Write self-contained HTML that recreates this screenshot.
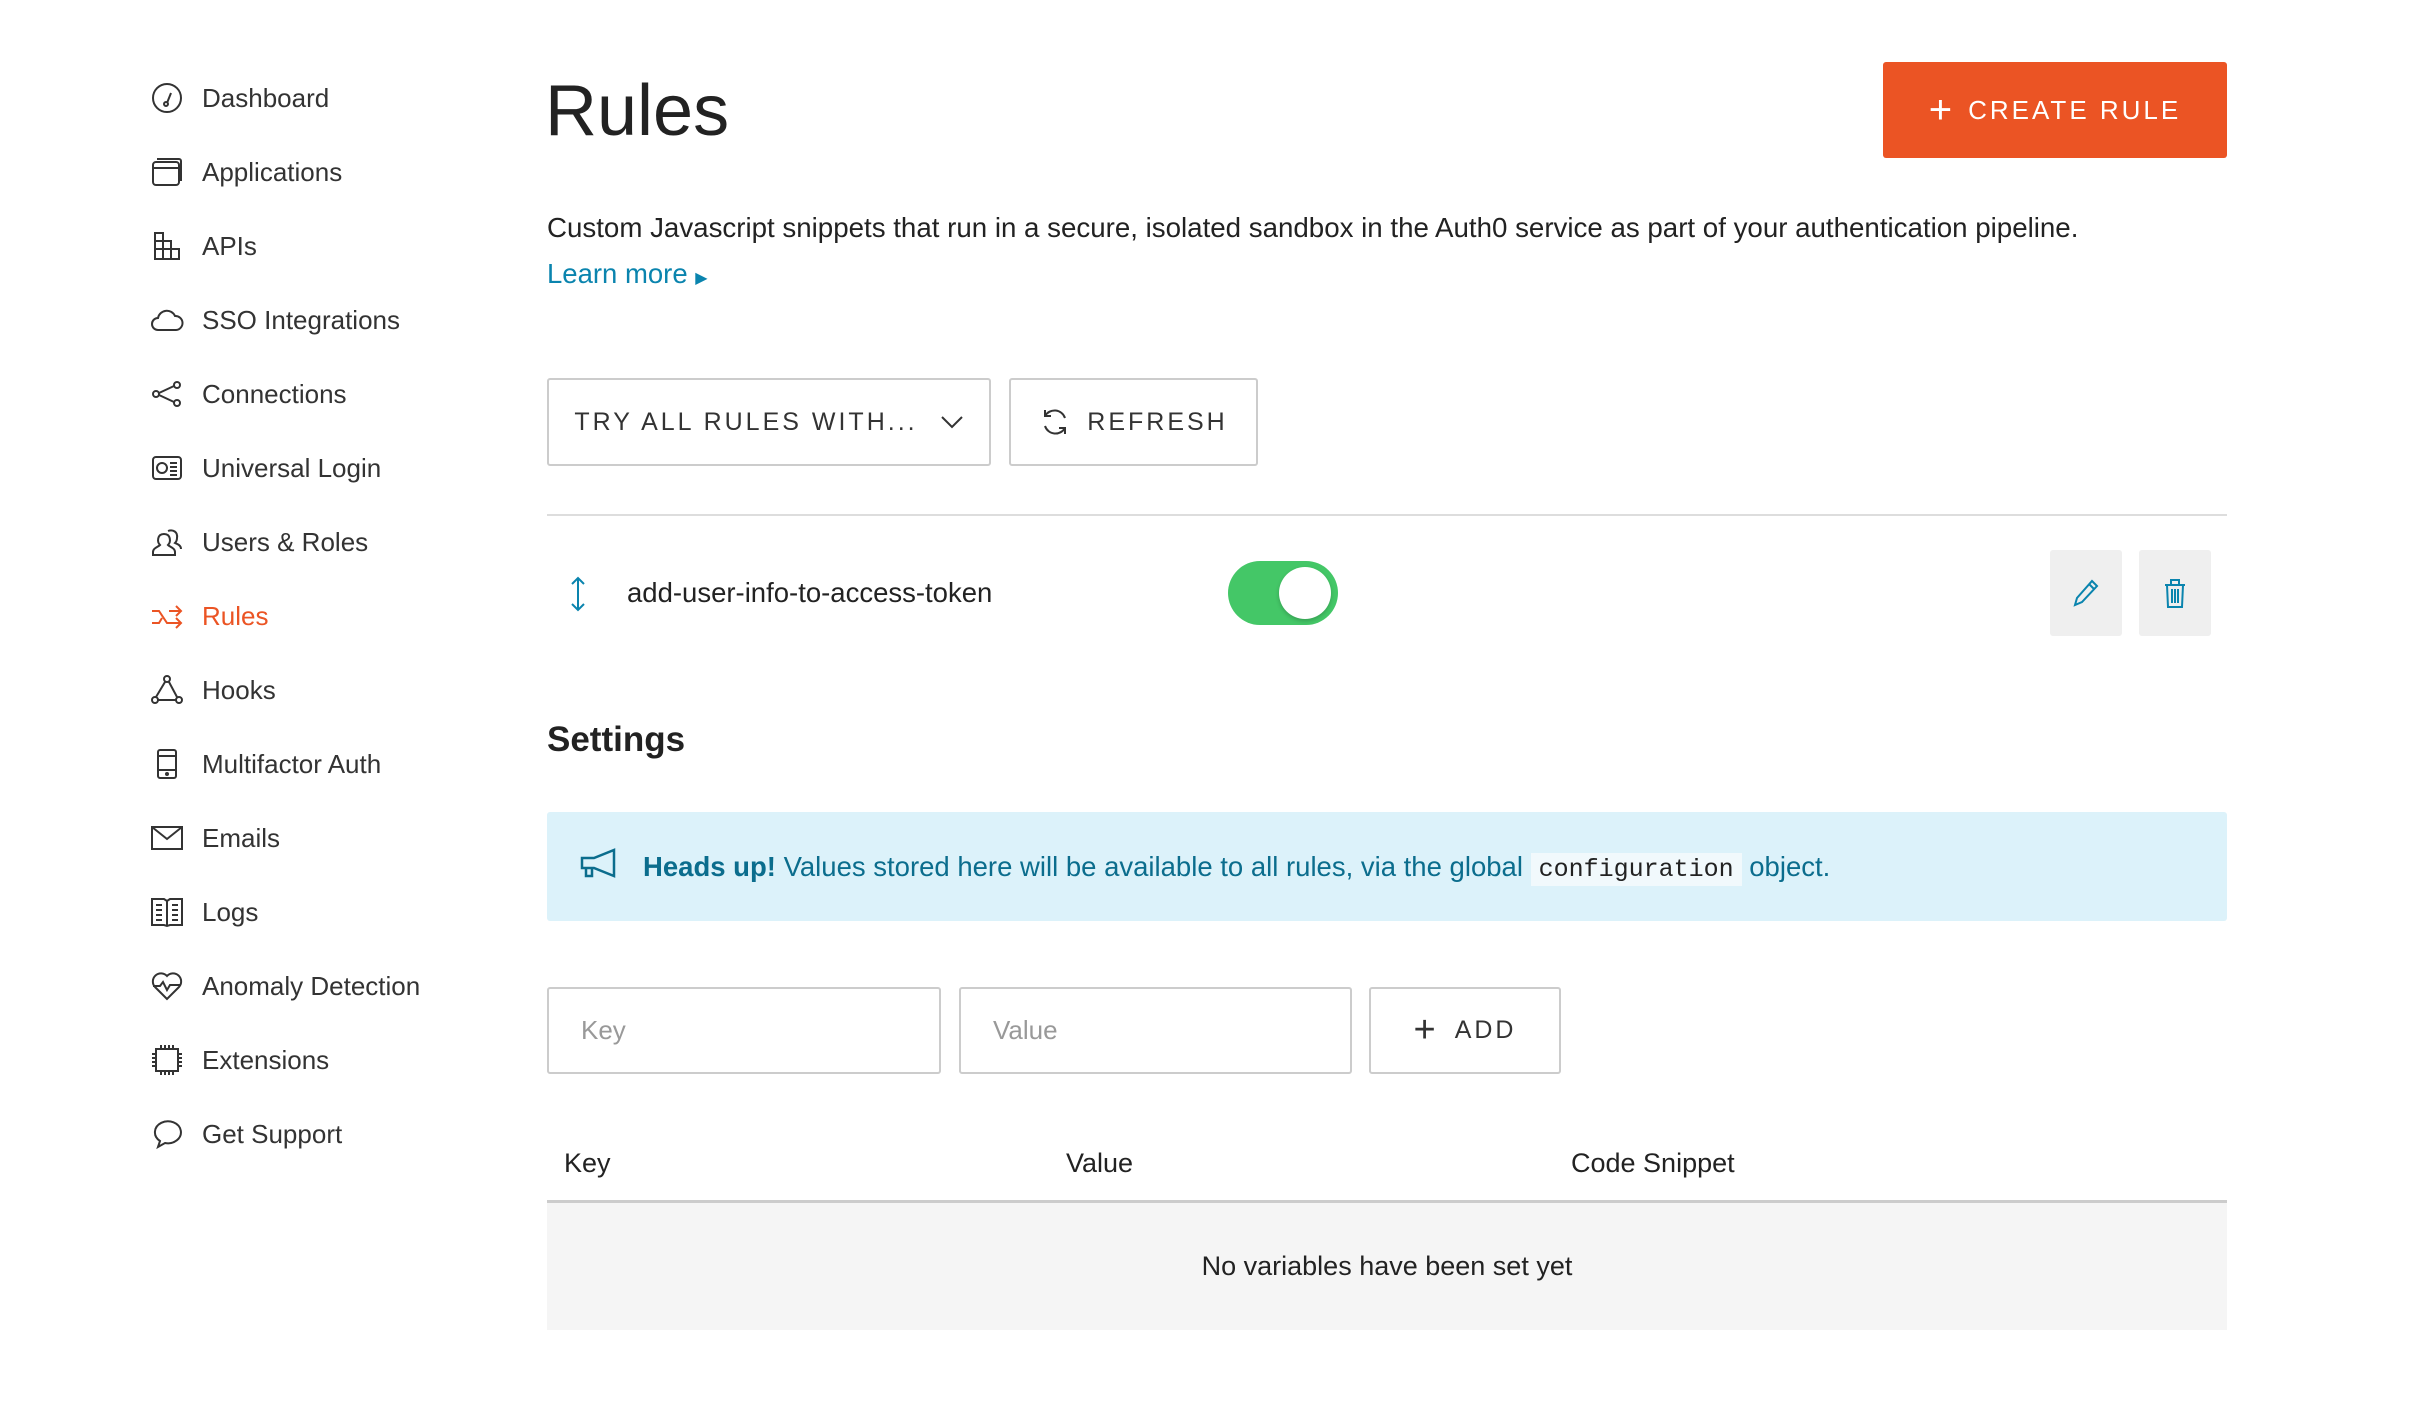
<!DOCTYPE html>
<html><head><meta charset="utf-8"><style>
*{margin:0;padding:0;box-sizing:border-box}
body{width:2436px;height:1410px;background:#fff;font-family:"Liberation Sans",sans-serif;color:#333;position:relative;overflow:hidden}
.a{position:absolute}
.nav{position:absolute;left:150px;height:40px;display:flex;align-items:center;font-size:26px;color:#333}
.nav svg{width:34px;height:34px;margin-right:18px;fill:none;stroke:#333;stroke-width:2}
.nav.on{color:#eb5424}.nav.on svg{stroke:#eb5424}
.btn{position:absolute;border:2px solid #ccc;border-radius:3px;display:flex;align-items:center;justify-content:center;font-size:25px;letter-spacing:3px;color:#333;background:#fff}
.inp{position:absolute;border:2px solid #ccc;border-radius:3px;font-size:26px;color:#999;padding-left:32px;display:flex;align-items:center}
</style></head><body>
<div class="nav" style="top:78px"><svg viewBox="0 0 34 34"><circle cx="17" cy="17" r="14"/><path d="M17 22l4-10"/><circle cx="16" cy="23" r="2"/></svg>Dashboard</div>
<div class="nav" style="top:152px"><svg viewBox="0 0 34 34"><rect x="3" y="7" width="26" height="23" rx="3"/><path d="M3 13h26M7 4h22a2 2 0 0 1 2 2v20"/></svg>Applications</div>
<div class="nav" style="top:226px"><svg viewBox="0 0 34 34"><path d="M5 4h8v26H5zM5 12h16v18M5 20h24v10H5M13 12v18M21 20v10"/></svg>APIs</div>
<div class="nav" style="top:300px"><svg viewBox="0 0 34 34"><path d="M8 27a6 6 0 0 1 0-12 9 9 0 0 1 17-2 7 7 0 0 1 1 14z"/></svg>SSO Integrations</div>
<div class="nav" style="top:374px"><svg viewBox="0 0 34 34"><circle cx="6" cy="17" r="3"/><circle cx="27" cy="8" r="3"/><circle cx="27" cy="26" r="3"/><path d="M9 16l15-7M9 18l15 7"/></svg>Connections</div>
<div class="nav" style="top:448px"><svg viewBox="0 0 34 34"><rect x="3" y="6" width="28" height="22" rx="3"/><circle cx="12" cy="17" r="5"/><path d="M20 12h7M20 16h7M20 20h7M20 24h7"/></svg>Universal Login</div>
<div class="nav" style="top:522px"><svg viewBox="0 0 34 34"><path d="M3 30v-3c0-4 5-5 7-7-3-3-3-11 4-11s7 8 4 11c2 2 7 3 7 7v3zM18 6c5-2 10 1 9 7 0 2-1 4-2 5 2 1 6 2 6 6"/></svg>Users &amp; Roles</div>
<div class="nav on" style="top:596px"><svg viewBox="0 0 34 34"><path d="M2 12h7l8 12h13M2 24h7l3-5M19 12h11M26 7l5 5-5 5M26 19l5 5-5 5"/></svg>Rules</div>
<div class="nav" style="top:670px"><svg viewBox="0 0 34 34"><circle cx="17" cy="6" r="3"/><circle cx="5" cy="27" r="3"/><circle cx="29" cy="27" r="3"/><path d="M15 9l-9 15M19 9l8 15M8 27h18"/></svg>Hooks</div>
<div class="nav" style="top:744px"><svg viewBox="0 0 34 34"><rect x="8" y="3" width="18" height="28" rx="2"/><path d="M8 9h18M8 23h18"/><circle cx="17" cy="27" r="1"/></svg>Multifactor Auth</div>
<div class="nav" style="top:818px"><svg viewBox="0 0 34 34"><rect x="2" y="6" width="30" height="22"/><path d="M2 6l15 12 15-12"/></svg>Emails</div>
<div class="nav" style="top:892px"><svg viewBox="0 0 34 34"><path d="M2 4h12l3 2 3-2h12v26H20l-3 1-3-1H2zM17 6v25M6 10h6M6 15h6M6 20h6M6 25h6M22 10h6M22 15h6M22 20h6M22 25h6"/></svg>Logs</div>
<div class="nav" style="top:966px"><svg viewBox="0 0 34 34"><path d="M17 30L5 18a7 7 0 0 1 12-11 7 7 0 0 1 12 11zM3 17h7l3-4 4 8 3-5h11"/></svg>Anomaly Detection</div>
<div class="nav" style="top:1040px"><svg viewBox="0 0 34 34"><rect x="6" y="6" width="22" height="22"/><path d="M11 2v4M15 2v4M19 2v4M23 2v4M11 28v4M15 28v4M19 28v4M23 28v4M2 11h4M2 15h4M2 19h4M2 23h4M28 11h4M28 15h4M28 19h4M28 23h4"/></svg>Extensions</div>
<div class="nav" style="top:1114px"><svg viewBox="0 0 34 34"><path d="M8 30l2-6a13 11 0 1 1 5 2z"/></svg>Get Support</div>

<div class="a" style="left:545px;top:70px;font-size:72px;color:#222">Rules</div>
<div class="a" style="left:1883px;top:62px;width:344px;height:96px;background:#eb5424;border-radius:3px;color:#fff;font-size:26px;letter-spacing:3px;display:flex;align-items:center;justify-content:center"><span style="font-size:40px;font-weight:300;margin-right:16px;letter-spacing:0">+</span>CREATE RULE</div>
<div class="a" style="left:547px;top:212px;font-size:27.7px;color:#222">Custom Javascript snippets that run in a secure, isolated sandbox in the Auth0 service as part of your authentication pipeline.</div>
<div class="a" style="left:547px;top:258px;font-size:27.5px;color:#0a84ae">Learn more <span style="font-size:16px">▶</span></div>

<div class="btn" style="left:547px;top:378px;width:444px;height:88px">TRY ALL RULES WITH...<svg width="24" height="16" viewBox="0 0 24 16" style="margin-left:22px"><path d="M2 3l10 10 10-10" fill="none" stroke="#333" stroke-width="2"/></svg></div>
<div class="btn" style="left:1009px;top:378px;width:249px;height:88px"><svg width="32" height="32" viewBox="0 0 32 32" style="margin-right:16px" fill="none" stroke="#333" stroke-width="2"><path d="M26 12A11 11 0 0 0 6 10M6 4v6h6M6 20a11 11 0 0 0 20 2M26 28v-6h-6"/></svg>REFRESH</div>

<div class="a" style="left:547px;top:514px;width:1680px;height:2px;background:#ddd"></div>
<svg class="a" style="left:568px;top:576px" width="20" height="36" viewBox="0 0 20 36" fill="none" stroke="#0a84ae" stroke-width="2"><path d="M10 2v32M4 8l6-6 6 6M4 28l6 6 6-6"/></svg>
<div class="a" style="left:627px;top:577px;font-size:27.5px;color:#222">add-user-info-to-access-token</div>
<div class="a" style="left:1228px;top:561px;width:110px;height:64px;border-radius:32px;background:#44c767"></div>
<div class="a" style="left:1279px;top:567px;width:52px;height:52px;border-radius:50%;background:#fff;box-shadow:0 2px 4px rgba(0,0,0,.2)"></div>
<div class="a" style="left:2050px;top:550px;width:72px;height:86px;background:#efefef;border-radius:3px"></div>
<svg class="a" style="left:2072px;top:578px" width="28" height="30" viewBox="0 0 28 30" fill="none" stroke="#0a84ae" stroke-width="2"><path d="M20 3l5 5L10 24l-7 3 2-7zM17 6l5 5"/></svg>
<div class="a" style="left:2139px;top:550px;width:72px;height:86px;background:#efefef;border-radius:3px"></div>
<svg class="a" style="left:2162px;top:577px" width="26" height="32" viewBox="0 0 26 32" fill="none" stroke="#0a84ae" stroke-width="2"><path d="M3 8h20M9 8V3h8v5M5 8l1 22h14l1-22M10 12v14M13 12v14M16 12v14"/></svg>

<div class="a" style="left:547px;top:720px;font-size:35px;font-weight:bold;color:#222">Settings</div>
<div class="a" style="left:547px;top:812px;width:1680px;height:109px;background:#dcf2fa;border-radius:3px"></div>
<svg class="a" style="left:580px;top:848px" width="38" height="36" viewBox="0 0 38 36" fill="none" stroke="#0b6d8d" stroke-width="2.5"><path d="M2 10h12l20-8v26L14 20H2zM6 20v8h6v-8"/></svg>
<div class="a" style="left:643px;top:851px;font-size:27.5px;color:#0b6d8d;white-space:nowrap"><b>Heads up!</b> Values stored here will be available to all rules, via the global <span style="font-family:'Liberation Mono',monospace;color:#222;background:#f1f9fc;padding:2px 8px;font-size:25px">configuration</span> object.</div>

<div class="inp" style="left:547px;top:987px;width:394px;height:87px">Key</div>
<div class="inp" style="left:959px;top:987px;width:393px;height:87px">Value</div>
<div class="btn" style="left:1369px;top:987px;width:192px;height:87px"><span style="font-size:38px;font-weight:300;margin-right:16px">+</span>ADD</div>

<div class="a" style="left:564px;top:1148px;font-size:27px;color:#222">Key</div>
<div class="a" style="left:1066px;top:1148px;font-size:27px;color:#222">Value</div>
<div class="a" style="left:1571px;top:1148px;font-size:27px;color:#222">Code Snippet</div>
<div class="a" style="left:547px;top:1200px;width:1680px;height:3px;background:#ccc"></div>
<div class="a" style="left:547px;top:1203px;width:1680px;height:127px;background:#f5f5f5;display:flex;align-items:center;justify-content:center;font-size:27px;color:#222">No variables have been set yet</div>
</body></html>
